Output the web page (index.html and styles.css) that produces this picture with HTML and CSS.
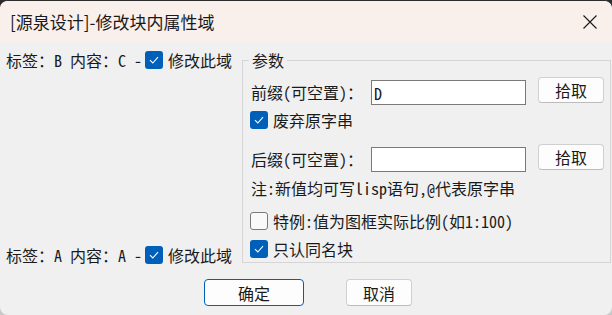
FILE: index.html
```html
<!DOCTYPE html>
<html lang="zh-CN">
<head>
    <meta charset="UTF-8">
    <title>[源泉设计]-修改块内属性域</title>
    <link rel="stylesheet" href="styles.css">
</head>
<body>
    <div class="window">
        <div class="titlebar">
            <span class="title">[源泉设计]-修改块内属性域</span>
            <svg class="close" width="16" height="16" viewBox="0 0 16 16">
                <path d="M1.5 1.5L14.5 14.5M14.5 1.5L1.5 14.5" stroke="#1a1a1a" stroke-width="1.1" fill="none"/>
            </svg>
        </div>

        <div class="content">
            <div class="main">
                <div class="fields">
                    <div class="field-row">
                        <span>标签：B 内容：C -</span>
                        <span class="check on"><svg viewBox="0 0 18 18"><path d="M5 9.2L7.8 12L13 6.2"/></svg></span>
                        <span>修改此域</span>
                    </div>
                    <div class="field-row last">
                        <span>标签：A 内容：A -</span>
                        <span class="check on"><svg viewBox="0 0 18 18"><path d="M5 9.2L7.8 12L13 6.2"/></svg></span>
                        <span>修改此域</span>
                    </div>
                </div>

                <fieldset class="params">
                    <legend>参数</legend>

                    <div class="input-row first">
                        <label class="input-label">前缀(可空置)：</label>
                        <input class="text-box" type="text" value="D">
                        <button class="btn pick">拾取</button>
                    </div>

                    <div class="check-row discard">
                        <span class="check on"><svg viewBox="0 0 18 18"><path d="M5 9.2L7.8 12L13 6.2"/></svg></span>
                        <span>废弃原字串</span>
                    </div>

                    <div class="input-row second">
                        <label class="input-label">后缀(可空置)：</label>
                        <input class="text-box" type="text" value="">
                        <button class="btn pick">拾取</button>
                    </div>

                    <div class="note">注:新值均可写lisp语句,@代表原字串</div>

                    <div class="check-row special">
                        <span class="check"></span>
                        <span>特例:值为图框实际比例(如1:100)</span>
                    </div>

                    <div class="check-row same-name">
                        <span class="check on"><svg viewBox="0 0 18 18"><path d="M5 9.2L7.8 12L13 6.2"/></svg></span>
                        <span>只认同名块</span>
                    </div>
                </fieldset>
            </div>

            <div class="actions">
                <button class="btn ok">确定</button>
                <button class="btn cancel">取消</button>
            </div>
        </div>
    </div>
</body>
</html>
```

FILE: styles.css
```css
html, body {
    margin: 0;
    padding: 0;
}
body {
    width: 612px;
    height: 315px;
    overflow: hidden;
    background: linear-gradient(#2b2b2b 50%, #c8c8c8 50%);
    font-family: "Noto Sans Mono CJK SC", "Noto Sans CJK SC", monospace;
    font-size: 16px;
    line-height: 20px;
    color: #1a1a1a;
}
.window {
    width: 612px;
    height: 314px;
    border-top: 1px solid #2b2b2b;
    border-radius: 8px;
    overflow: hidden;
    background-color: #f0f0f0;
}
.titlebar {
    height: 40px;
    background-color: #f9f0ec;
    display: flex;
    align-items: center;
    justify-content: space-between;
    padding: 0 14px 0 10px;
}
.title {
    font-family: "Noto Sans CJK SC", sans-serif;
    font-size: 17px;
    color: #1a1a1a;
    margin-top: 1px;
}
.close {
    display: block;
    margin-top: 1px;
}
.content {
    padding: 9px 0 0 6px;
}
.main {
    display: flex;
}
.fields {
    width: 236px;
    display: flex;
    flex-direction: column;
    justify-content: space-between;
}
.field-row {
    display: flex;
    align-items: center;
    height: 20px;
    white-space: nowrap;
}
.field-row .check {
    margin: 0 5px 0 3px;
}
.field-row.last {
    margin-bottom: -2px;
}
.check {
    width: 18px;
    height: 18px;
    box-sizing: border-box;
    border-radius: 3px;
    border: 1px solid #7a7a7a;
    background-color: #f9f9f9;
    flex: none;
}
.check.on {
    border: none;
    background-color: #005fb8;
}
.check svg {
    display: block;
    width: 18px;
    height: 18px;
    fill: none;
    stroke: #ffffff;
    stroke-width: 1.1;
}
.params {
    box-sizing: border-box;
    width: 369px;
    margin: 1px 0 0 0;
    padding: 0 5px 4px 6px;
    border: 1px solid #d5d5d5;
    flex: none;
}
.params legend {
    padding: 0 3px;
    line-height: 18px;
}
.input-row {
    display: flex;
    align-items: flex-start;
    margin-left: 2px;
}
.input-row.first {
    margin-top: 8px;
}
.input-row.second {
    margin-top: 15px;
}
.input-label {
    width: 120px;
    margin-top: 5px;
    white-space: nowrap;
}
.text-box {
    box-sizing: border-box;
    width: 155px;
    height: 25px;
    margin: 3px 0 0 0;
    padding: 0 2px;
    border: 1px solid #7a7a7a;
    border-radius: 0;
    background-color: #ffffff;
    font-family: inherit;
    font-size: 16px;
    color: #1a1a1a;
    outline: none;
}
.btn {
    box-sizing: border-box;
    height: 26px;
    padding: 0;
    border: 1px solid #d0d0d0;
    border-bottom-color: #bcbcbc;
    border-radius: 4px;
    background-color: #fdfdfd;
    font-family: inherit;
    font-size: 16px;
    color: #1a1a1a;
}
.pick {
    width: 66px;
    margin-left: 12px;
}
.check-row {
    display: flex;
    align-items: center;
    gap: 5px;
    height: 18px;
    margin-left: 1px;
    white-space: nowrap;
}
.check-row.discard {
    margin-top: 6px;
}
.note {
    margin: 7px 0 0 2px;
    line-height: 18px;
    white-space: nowrap;
}
.check-row.special {
    margin-top: 15px;
}
.check-row.same-name {
    margin-top: 10px;
}
.actions {
    display: flex;
    justify-content: center;
    gap: 42px;
    margin-top: 16px;
    padding-right: 2px;
}
.actions .btn {
    height: 27px;
}
.ok {
    width: 100px;
    border-color: #005fb8;
}
.cancel {
    width: 66px;
}
```
